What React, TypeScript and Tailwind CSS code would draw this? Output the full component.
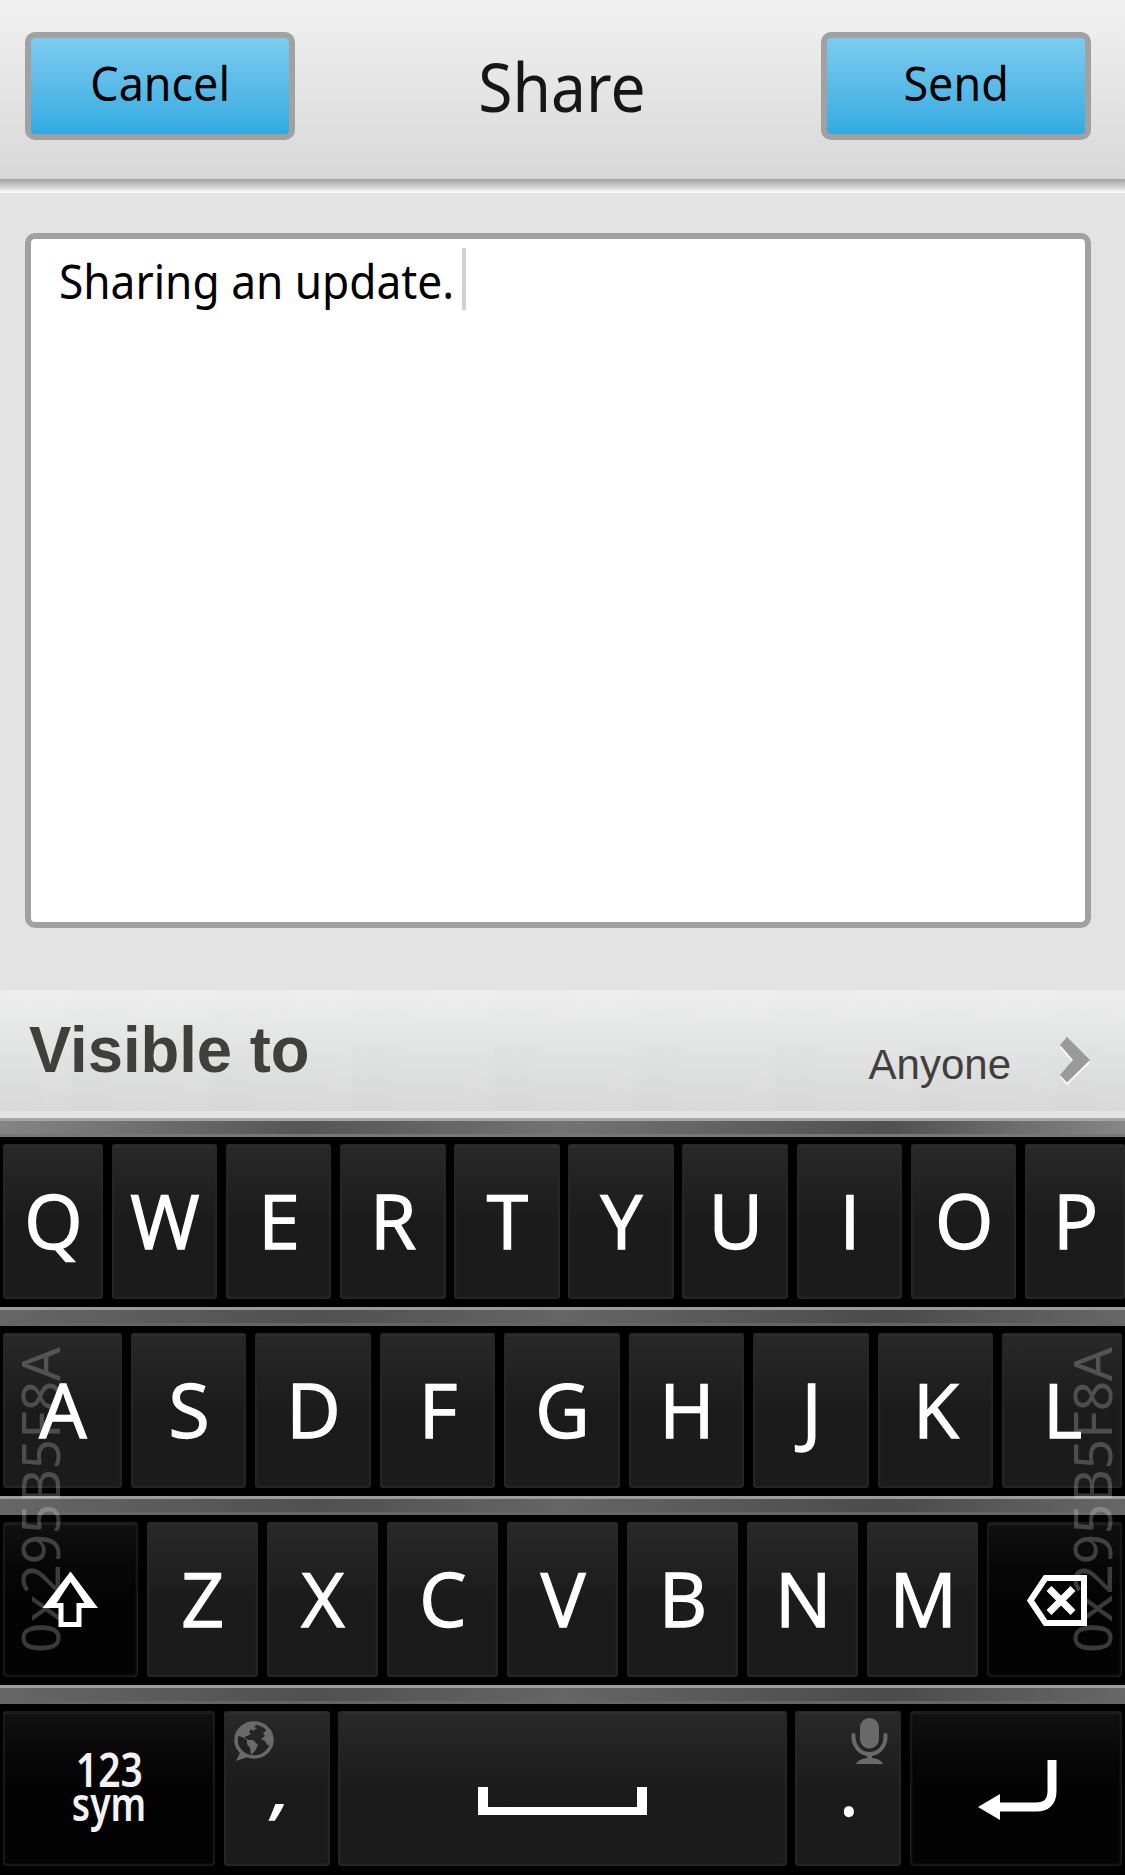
import type { ReactNode } from "react";

const NOTO = "font-['Noto_Sans','Open_Sans',sans-serif]";

function HeaderButton({ label, scale }: { label: string; scale: string }) {
  return (
    <button
      className={`flex h-[108px] w-[270px] justify-center rounded-[10px] border-[6px] border-[#a1a1a1] bg-linear-to-b from-[#7ccbee] to-[#2eabe2] pt-[22px] text-[47px] leading-[47px] text-black ${NOTO}`}
    >
      <span className={`inline-block ${scale}`}>{label}</span>
    </button>
  );
}

function Key({
  children,
  className = "flex-1",
  dark = false,
}: {
  children?: ReactNode;
  className?: string;
  dark?: boolean;
}) {
  return (
    <div
      className={`relative flex h-[155px] min-w-0 justify-center rounded-[4px] ${
        dark
          ? "bg-linear-to-b from-[#111111] to-[#030303] to-50% shadow-[inset_0_0_2px_2px_#1b1b1b,inset_0_3px_2px_#242424]"
          : "bg-linear-to-b from-[#292929] to-[#1b1b1b] to-50% shadow-[inset_0_0_2px_2px_#272727,inset_0_3px_2px_#363636]"
      } ${className}`}
    >
      {children}
    </div>
  );
}

function Letter({ children }: { children: string }) {
  return (
    <span className="pt-[38px] pl-px font-['Open_Sans','Noto_Sans',sans-serif] text-[75px] leading-[76px] whitespace-nowrap text-white [-webkit-text-stroke:1.3px_white]">
      {children}
    </span>
  );
}

function Fret({ first = false }: { first?: boolean }) {
  return (
    <div
      className={`h-[19px] border-t-[3px] border-b-[3px] ${
        first
          ? "border-t-[#a6a6a6] border-b-[#777777] bg-[linear-gradient(97deg,#858585_0%,#555555_27%,#737373_50%,#505050_79%,#868686_100%)]"
          : "border-t-[#9b9b9b] border-b-[#656565] bg-[linear-gradient(97deg,#666666_0%,#505050_28%,#656565_50%,#4b4b4b_79%,#676767_100%)]"
      }`}
    />
  );
}

function Row({ children }: { children: ReactNode }) {
  return <div className="flex h-[170px] gap-[8.6px] bg-black pt-[7px] pr-[3px] pl-[3px]">{children}</div>;
}

function Serial({ className }: { className: string }) {
  return (
    <div className={`pointer-events-none absolute top-[227px] flex h-[310px] w-[54px] items-center justify-center ${className}`}>
      <span className="-rotate-90 text-[53px] leading-[54px] whitespace-nowrap text-white/22">0x295B5F8A</span>
    </div>
  );
}

export default function App() {
  return (
    <div className={`flex h-[1875px] w-[1125px] flex-col overflow-hidden bg-[#e3e3e3] ${NOTO}`}>
      <header className="flex h-[179px] shrink-0 justify-between bg-linear-to-b from-[#f1f1f1] to-[#d8d8d8] pt-[32px] pr-[34px] pl-[25px]">
        <HeaderButton label="Cancel" scale="scale-x-[0.955]" />
        <h1 className="pt-[21px] pl-[8px] text-[67px] leading-[67px] text-[#161616]">
          <span className="inline-block scale-x-[0.93]">Share</span>
        </h1>
        <HeaderButton label="Send" scale="scale-x-[0.955]" />
      </header>
      <div className="h-[14px] shrink-0 bg-linear-to-b from-[#a2a2a2] via-[#cccccc] to-white" />

      <main className="h-[797px] shrink-0 pt-[40px] pr-[34px] pl-[25px]">
        <div className="flex h-[695px] rounded-[10px] border-[6px] border-[#a1a1a1] bg-white pl-[28px]">
          <span className="w-[403px] pt-[19px] text-[47px] leading-[47px] whitespace-nowrap text-black">
            <span className="inline-block origin-left scale-x-[0.941]">Sharing an update.</span>
          </span>
          <span className="mt-[9px] h-[62px] w-[4px] bg-[#d1d2d4]" />
        </div>
      </main>

      <section className="flex h-[121px] shrink-0 bg-[repeating-linear-gradient(to_right,rgba(255,255,255,0)_0px,rgba(255,255,255,0.05)_141px),linear-gradient(to_bottom,#eeeeef_0%,#e2e3e3_45%,#d7d7d7_100%)] bg-[position:-71px_0,0_0] font-['Liberation_Sans',Arial,sans-serif]">
        <h2 className="pt-[28px] pl-[29px] text-[64px] leading-[64px] font-bold text-[#403f3d]">
          <span className="inline-block origin-left scale-x-[0.99]">Visible to</span>
        </h2>
        <span className="mr-[48px] ml-auto pt-[54px] text-[42px] leading-[42px] text-[#403f3d]">Anyone</span>
        <svg className="mt-[47px] mr-[34px] h-[48px] w-[32px]" viewBox="0 0 32 48">
          <path d="M8 2.500L31 25.500L8 48L1 40L14 25.500L1 10.500Z" fill="#fff" />
          <path d="M8 0L31 23L8 45.500L1 38L14 23L1 8Z" fill="#9a9a9a" />
        </svg>
      </section>
      <div className="h-[7px] shrink-0" />

      <section className="relative h-[757px] shrink-0 bg-black">
        <Fret first />
        <div className="flex h-[170px] gap-[8.6px] bg-black pt-[7px] pl-[3px]">
          <Key className="w-[100px]">
            <Letter>Q</Letter>
          </Key>
          {["W", "E", "R", "T", "Y", "U", "I", "O"].map((k) => (
            <Key key={k}>
              <Letter>{k}</Letter>
            </Key>
          ))}
          <Key className="w-[100px]">
            <Letter>P</Letter>
          </Key>
        </div>

        <Fret />
        <Row>
          <Key className="w-[119px]">
            <Letter>A</Letter>
          </Key>
          {["S", "D", "F", "G", "H", "J", "K"].map((k) => (
            <Key key={k}>
              <Letter>{k}</Letter>
            </Key>
          ))}
          <Key className="w-[120px]">
            <Letter>L</Letter>
          </Key>
        </Row>

        <Fret />
        <Row>
          <Key dark className="w-[135px]">
            <svg className="mt-[49px] mr-px h-[57px] w-[56px]" viewBox="0 0 56 57" fill="#fff">
              <path
                fillRule="evenodd"
                d="M28.500 0.500L56 37H39.500V56H16.500V37H0.500ZM28.500 11L14.500 32H21.500V51H34.500V32H42.500Z"
              />
            </svg>
          </Key>
          {["Z", "X", "C", "V", "B", "N", "M"].map((k) => (
            <Key key={k}>
              <Letter>{k}</Letter>
            </Key>
          ))}
          <Key dark className="w-[135px]">
            <svg className="mt-[53px] ml-[5px] h-[51px] w-[60px]" viewBox="0 0 60 51" fill="none">
              <path d="M18.5 3H57V48H18.5L3.5 25.5Z" stroke="#fff" strokeWidth="6" />
              <path d="M22 13.5L46 37.5M46 13.5L22 37.5" stroke="#fff" strokeWidth="7" />
            </svg>
          </Key>
        </Row>

        <Fret />
        <Row>
          <Key dark className="w-[212px]">
            <span className="flex flex-col items-center pt-[41px] text-[47px] leading-[34px] font-semibold text-[#f2f2f2]">
              <span className="scale-x-[0.83]">123</span>
              <span className="scale-x-[0.79]">sym</span>
            </span>
          </Key>
          <Key className="w-[106px]">
            <span className="inline-block -skew-x-12 pt-[38px] pl-[12px] text-[68px] leading-[74px] font-semibold text-white">,</span>
            <svg className="absolute top-[9px] left-[9px] h-[42px] w-[42px]" viewBox="0 0 42 42">
              <ellipse cx="21" cy="20" rx="18" ry="17" fill="none" stroke="#6a6a6a" strokeWidth="3.5" />
              <path d="M8 31L3 41L17 36Z" fill="#6a6a6a" />
              <path
                d="M5 13Q10 5 20 4L23 5L21 7L24 8L20 11L18 9L16 12L18 14L14 16L11 17L15 20L20 20L25 25L22 31L18 35L17 28L14 24L14 20L9 17L5 16Z"
                fill="#6a6a6a"
              />
              <path d="M34 10L30 13L32 16L28 19L32 21L35 26L38 22L38 14Z" fill="#6a6a6a" />
            </svg>
          </Key>
          <Key>
            <svg className="mt-[76px] h-[28px] w-[169px]" viewBox="0 0 169 28" fill="#fff">
              <path d="M0 0H10V20H159V0H169V28H0Z" />
            </svg>
          </Key>
          <Key className="w-[106px]">
            <Letter>.</Letter>
            <svg className="absolute top-[7px] right-[13px] h-[46px] w-[37px]" viewBox="0 0 37 46" fill="#6a6a6a">
              <rect x="9" y="0" width="19" height="30.5" rx="9.5" />
              <path d="M2.5 17V19A16 17 0 0 0 34.5 19V17" fill="none" stroke="#6a6a6a" strokeWidth="4" strokeLinecap="round" />
              <path d="M16 35H21V40Q30 41 32 46H5Q7 41 16 40Z" />
            </svg>
          </Key>
          <Key dark className="w-[212px]">
            <svg className="mt-[49px] ml-[2px] h-[61px] w-[79px]" viewBox="0 0 79 61">
              <path d="M74 0V31Q74 47 58 47H18" fill="none" stroke="#fff" strokeWidth="9" />
              <path d="M0 47L22 34V60Z" fill="#fff" />
            </svg>
          </Key>
        </Row>

        <Serial className="left-[13px]" />
        <Serial className="left-[1065px]" />
      </section>
    </div>
  );
}
